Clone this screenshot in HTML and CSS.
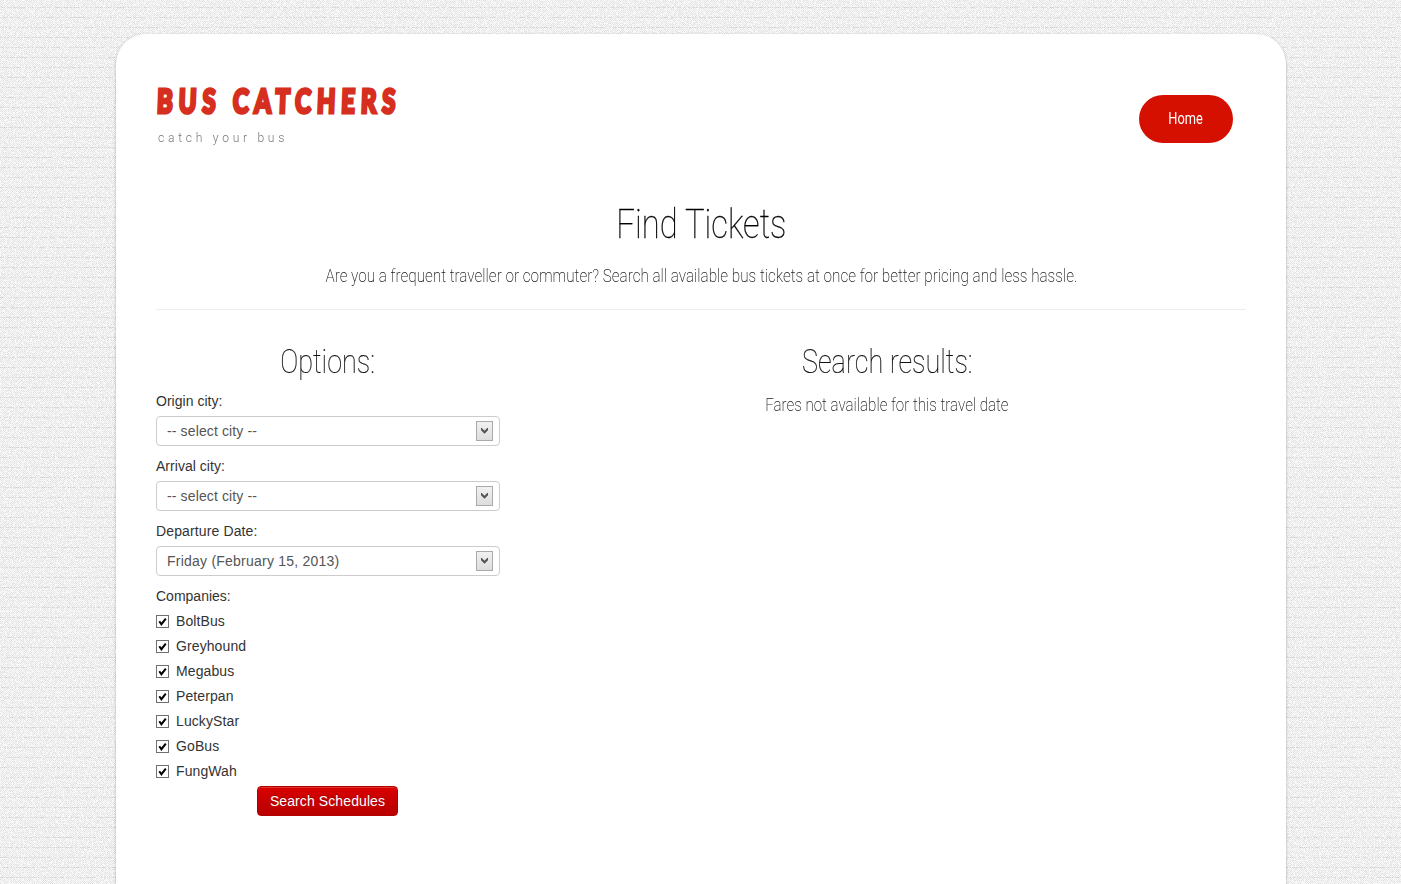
FILE: index.html
```html
<!DOCTYPE html>
<html lang="en">
<head>
<meta charset="utf-8">
<title>Bus Catchers</title>
<link rel="stylesheet" href="styles.css">
</head>
<body>
<svg class="grain" aria-hidden="true" width="1401" height="884">
  <filter id="cloth" x="0" y="0" width="100%" height="100%" color-interpolation-filters="sRGB">
    <feTurbulence type="fractalNoise" baseFrequency="0.65" numOctaves="2" seed="4"/>
    <feColorMatrix values="0 0 0 0 1  0 0 0 0 1  0 0 0 0 1  4 0 0 0 -1.7"/>
  </filter>
  <rect width="1401" height="884" filter="url(#cloth)"/>
</svg>
<main class="page">
  <header class="header">
    <div class="brand">
      <h1 class="logo"><span class="fit fit-logo">BUS CATCHERS</span></h1>
      <p class="tagline"><span class="fit fit-tagline">catch your bus</span></p>
    </div>
    <nav><a class="nav-link" href="#"><span class="fit fit-nav">Home</span></a></nav>
  </header>
  <section class="intro">
    <h2 class="title"><span class="fit fit-title">Find Tickets</span></h2>
    <p class="lead"><span class="fit fit-lead">Are you a frequent traveller or commuter? Search all available bus tickets at once for better pricing and less hassle.</span></p>
  </section>
  <div class="columns">
    <form class="options">
      <h3 class="subtitle"><span class="fit fit-options">Options:</span></h3>
      <div class="label">Origin city:</div>
      <div class="select"><span>-- select city --</span><i class="drop"><svg width="7" height="6" viewBox="0 0 7 6"><path d="M0 0h.8l2.7 2.7L6.2 0H7v2.2L3.5 5.7 0 2.2z" fill="#555"/></svg></i></div>
      <div class="label">Arrival city:</div>
      <div class="select"><span>-- select city --</span><i class="drop"><svg width="7" height="6" viewBox="0 0 7 6"><path d="M0 0h.8l2.7 2.7L6.2 0H7v2.2L3.5 5.7 0 2.2z" fill="#555"/></svg></i></div>
      <div class="label date-label">Departure Date:</div>
      <div class="select date"><span>Friday (February 15, 2013)</span><i class="drop"><svg width="7" height="6" viewBox="0 0 7 6"><path d="M0 0h.8l2.7 2.7L6.2 0H7v2.2L3.5 5.7 0 2.2z" fill="#555"/></svg></i></div>
      <div class="label companies-label">Companies:</div>
      <label class="check"><i class="box"><svg width="9" height="9" viewBox="0 0 9 9"><path d="M1.3 4.2l2.1 3L7.8 1.6" fill="none" stroke="#000" stroke-width="2"/></svg></i>BoltBus</label>
      <label class="check"><i class="box"><svg width="9" height="9" viewBox="0 0 9 9"><path d="M1.3 4.2l2.1 3L7.8 1.6" fill="none" stroke="#000" stroke-width="2"/></svg></i>Greyhound</label>
      <label class="check"><i class="box"><svg width="9" height="9" viewBox="0 0 9 9"><path d="M1.3 4.2l2.1 3L7.8 1.6" fill="none" stroke="#000" stroke-width="2"/></svg></i>Megabus</label>
      <label class="check"><i class="box"><svg width="9" height="9" viewBox="0 0 9 9"><path d="M1.3 4.2l2.1 3L7.8 1.6" fill="none" stroke="#000" stroke-width="2"/></svg></i>Peterpan</label>
      <label class="check"><i class="box"><svg width="9" height="9" viewBox="0 0 9 9"><path d="M1.3 4.2l2.1 3L7.8 1.6" fill="none" stroke="#000" stroke-width="2"/></svg></i>LuckyStar</label>
      <label class="check"><i class="box"><svg width="9" height="9" viewBox="0 0 9 9"><path d="M1.3 4.2l2.1 3L7.8 1.6" fill="none" stroke="#000" stroke-width="2"/></svg></i>GoBus</label>
      <label class="check"><i class="box"><svg width="9" height="9" viewBox="0 0 9 9"><path d="M1.3 4.2l2.1 3L7.8 1.6" fill="none" stroke="#000" stroke-width="2"/></svg></i>FungWah</label>
      <button class="submit" type="button">Search Schedules</button>
    </form>
    <section class="results">
      <h3 class="subtitle"><span class="fit fit-results">Search results:</span></h3>
      <p class="message"><span class="fit fit-message">Fares not available for this travel date</span></p>
    </section>
  </div>
</main>
</body>
</html>
```
FILE: styles.css
```css
* { box-sizing: border-box; }
html, body { height: 100%; }
body {
  margin: 0;
  padding-top: 34px;
  overflow: hidden;
  display: flex;
  justify-content: center;
  font: 14px/20px "Liberation Sans", Arial, sans-serif;
  color: #333;
  background:
    linear-gradient(rgba(0,0,0,.08) 1px, transparent 1px) 0 7px / 10px 10px,
    repeating-conic-gradient(#dedede 0 25%, #f5f5f5 0 50%) 0 0 / 2px 2px;
}
h1, h2, h3, p { margin: 0; font-weight: inherit; }
.grain { position: absolute; left: 0; top: 0; z-index: 0; opacity: .8; }
.page {
  position: relative;
  width: 1170px;
  height: 850px;
  flex: none;
  padding: 0 40px;
  margin-left: 1px;
  background: #fff;
  border-radius: 30px 30px 0 0;
  box-shadow: 0 1px 3px rgba(0,0,0,.3);
}
.fit { display: inline-block; white-space: nowrap; }
.header { display: flex; justify-content: space-between; height: 156px; }
.brand { padding-top: 45px; }
.logo {
  height: 42px;
  font: 900 33px/42px Lato, sans-serif;
  letter-spacing: 8px;
  color: #d62f20;
  -webkit-text-stroke: 3.2px #d62f20;
  stroke-linejoin: round;
}
.fit-logo { transform-origin: left; transform: translateX(1px) scaleX(.727) skewX(-3deg); }
.tagline { padding: 7px 0 0 2px; font: 300 13px/20px Roboto, sans-serif; letter-spacing: 4px; color: #777; }
.fit-tagline { transform-origin: left; transform: scaleX(.93); }
.nav-link {
  display: flex; align-items: center; justify-content: center;
  width: 94px; height: 48px; margin: 61px 13px 0 0;
  border-radius: 24px; background: #d51000; color: #fff;
  font: 16px/20px Roboto, sans-serif; text-decoration: none;
}
.fit-nav { transform: scaleX(.8); }
.intro { height: 120px; border-bottom: 1px solid #eee; text-align: center; }
.title { font: 100 41px/48px Roboto, sans-serif; color: #000; padding-top: 10px; -webkit-text-stroke: .3px #000; }
.fit-title { transform: scaleX(.8); }
.lead, .message { font: 200 18px/28px Roboto, sans-serif; color: #222; }
.lead { display: flex; justify-content: center; padding-top: 14px; }
.fit-lead { transform: scaleX(.848); }
.columns { display: grid; grid-template-columns: 344px 718px; gap: 28px; padding-top: 30px; }
.subtitle { height: 51px; font: 100 34px/42px Roboto, sans-serif; text-align: center; color: #111; -webkit-text-stroke: .2px #111; }
.fit-options, .fit-results { transform: scaleX(.795); }
.fit-message { transform: scaleX(.84); }
.options { display: flex; flex-direction: column; }
.label { height: 20px; margin-bottom: 5px; letter-spacing: .03px; }
.date-label { letter-spacing: .13px; }
.companies-label { letter-spacing: 0; }
.select {
  display: flex; align-items: center; justify-content: space-between;
  height: 30px; margin-bottom: 10px; padding: 0 6px 0 10px;
  border: 1px solid #ccc; border-radius: 4px; color: #555;
  letter-spacing: .13px;
}
.date { letter-spacing: .23px; }
.drop {
  display: flex; align-items: center; justify-content: center;
  width: 17px; height: 20px; border: 1px solid #aaa;
  background: linear-gradient(#f1f1f1, #ddd);
}
.check { display: flex; align-items: center; height: 20px; margin-bottom: 5px; gap: 7px; letter-spacing: .1px; }
.box { display: flex; align-items: center; justify-content: center; width: 13px; height: 13px; border: 1px solid #707070; margin-top: 1px; }
.submit {
  align-self: center; width: 141px; height: 30px; padding: 0; margin-right: 1px;
  border: 1px solid #b00000; border-radius: 4px;
  background: linear-gradient(#d90000, #b80000);
  box-shadow: inset 0 1px 0 rgba(255,255,255,.2);
  color: #fff; font: 14px/20px "Liberation Sans", Arial, sans-serif; letter-spacing: .1px;
  text-shadow: 0 -1px 0 rgba(0,0,0,.25);
}
.results { text-align: center; }
```
